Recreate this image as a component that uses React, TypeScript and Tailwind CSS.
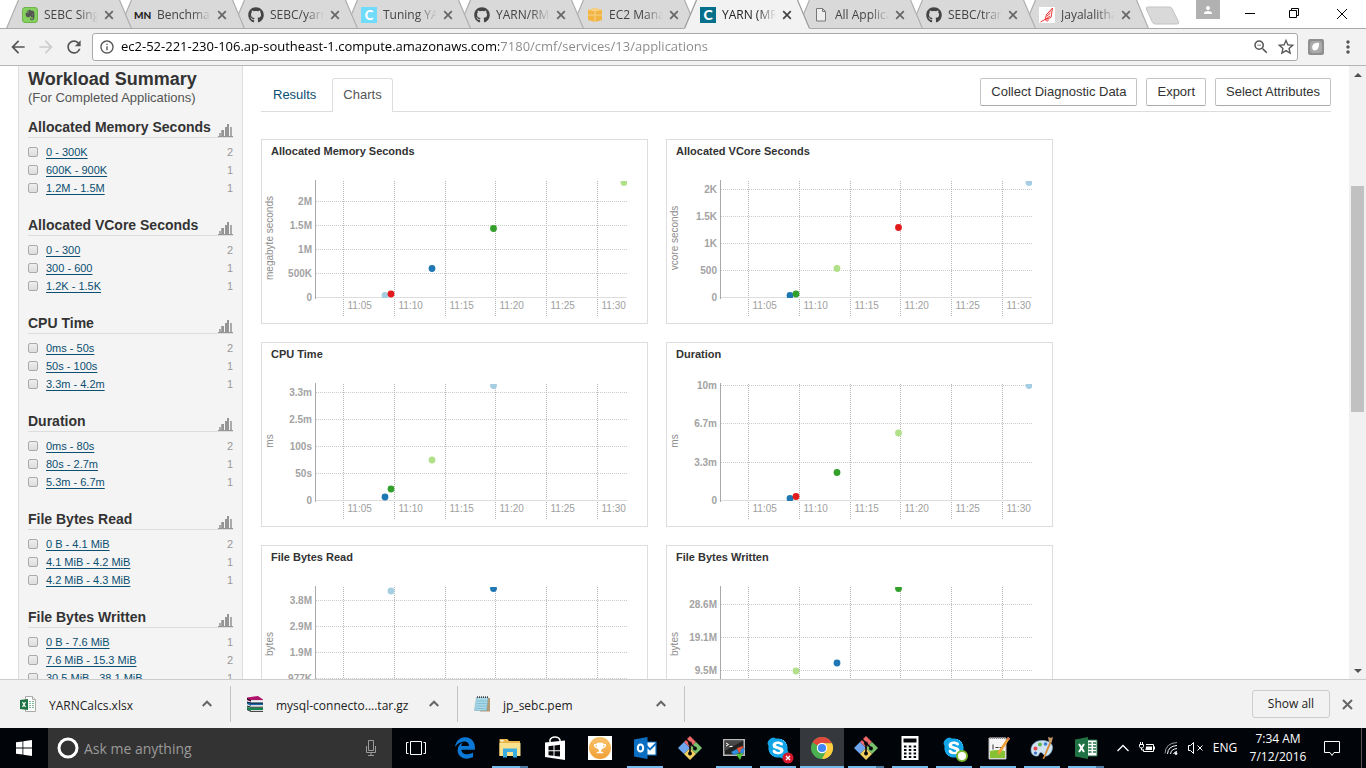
import React from "react";
import {
  MdArrowBack,
  MdArrowForward,
  MdRefresh,
  MdInfoOutline,
  MdZoomOut,
  MdStarBorder,
  MdMoreVert,
  MdPerson,
} from "react-icons/md";
import { FaEvernote, FaGithub, FaSkype, FaTrophy } from "react-icons/fa";
import { FaEdgeLegacy } from "react-icons/fa6";

/* ---------- Browser tabs ---------- */

type BrowserTab = { title: string; icon: React.ReactNode; active?: boolean };

const githubIcon = <FaGithub className="size-4 text-[#444]" />;

const browserTabs: BrowserTab[] = [
  {
    title: "SEBC Singapore",
    icon: (
      <span className="flex size-4 items-center justify-center rounded-[3px] border border-[#6fb34c] bg-[#85d160]">
        <FaEvernote className="size-3 text-[#555]" />
      </span>
    ),
  },
  {
    title: "Benchmark",
    icon: <span className="-ml-px font-[Lato] text-[10px] font-black text-[#222]">MN</span>,
  },
  { title: "SEBC/yarn", icon: githubIcon },
  {
    title: "Tuning YARN",
    icon: (
      <span className="flex size-4 items-center justify-center bg-[#6fdcfb] font-[Lato] text-[13px] leading-4 font-black text-white">
        C
      </span>
    ),
  },
  { title: "YARN/RM", icon: githubIcon },
  {
    title: "EC2 Management",
    icon: (
      <svg viewBox="0 0 16 16" className="size-4">
        <path d="M1 3l7-2 7 2v10l-7 2-7-2z" fill="#f2b544" />
        <path d="M1 3l7 1.6L15 3 8 1z" fill="#f8d183" />
        <path d="M8 4.6V15M1 8h14" stroke="#f9dfa6" strokeWidth="0.7" />
      </svg>
    ),
  },
  {
    title: "YARN (MR2)",
    active: true,
    icon: (
      <span className="flex size-4 items-center justify-center bg-[#04708c] font-[Lato] text-[14px] leading-4 font-black text-white">
        C
      </span>
    ),
  },
  {
    title: "All Applications",
    icon: (
      <svg viewBox="0 0 16 16" className="size-4" fill="#eee" stroke="#777">
        <path d="M3.5 1.500h6l3 3v9.500h-9zM9.500 1.500v3h3" />
      </svg>
    ),
  },
  { title: "SEBC/transfer", icon: githubIcon },
  {
    title: "Jayalalithaa",
    icon: (
      <svg viewBox="0 0 16 16" className="size-4" fill="none" stroke="#f23a3a">
        <path d="M0 0h16v16H0z" fill="#fff" stroke="none" />
        <path d="M13.500 1L12 10.500l-6 2 1.500-5zM12 3.500L7.500 7.500M11.500 6l-4 3.500M11 9l-5 3.500M6 12.500L1.500 15M6 12.500l2.500 2M9 11.500v2.500" />
      </svg>
    ),
  },
];

const tabLayers = ["z-10", "z-9", "z-8", "z-7", "z-6", "z-5", "z-20", "z-3", "z-2", "z-1"];

function BrowserTabItem({ tab, layer }: { tab: BrowserTab; layer: string }) {
  return (
    <div
      className={`relative -mb-px -ml-[13px] flex h-[29px] w-[126px] items-center gap-1.5 pt-px pr-[18px] pl-4 ${layer}`}
    >
      <svg viewBox="0 0 126 29" className="absolute inset-0 h-full w-full">
        <path d="M0 29L12.5 0H113.5L126 29Z" fill={tab.active ? "#f2f2f2" : "#d9d9d9"} />
        <path d="M0.5 28.5L12.5 0M113.5 0L125.5 28.5" stroke={tab.active ? "#999" : "#aeaeae"} strokeWidth="1.2" />
        {!tab.active && <path d="M0 28.5H126" stroke="#a9a9a9" />}
      </svg>
      <span className="relative flex w-4 shrink-0 items-center">{tab.icon}</span>
      <button
        type="button"
        className={`relative min-w-0 flex-1 overflow-hidden text-left text-[12px] leading-4 whitespace-nowrap [mask-image:linear-gradient(90deg,#000_65%,transparent)] ${tab.active ? "text-[#222]" : "text-[#444]"}`}
      >
        {tab.title}
      </button>
      <button type="button" aria-label={`Close ${tab.title}`} className="relative">
        <svg viewBox="0 0 10 10" className="size-[10px]" stroke={tab.active ? "#444" : "#666"} strokeWidth="1.7">
          <path d="M1.2 1.2l7.6 7.6M8.8 1.2L1.2 8.8" />
        </svg>
      </button>
    </div>
  );
}

function TabStrip() {
  return (
    <div className="flex h-[29px] shrink-0 border-b border-[#a9a9a9] bg-white pl-[19px]">
      {browserTabs.map((t, i) => (
        <BrowserTabItem key={t.title} tab={t} layer={tabLayers[i]} />
      ))}
      <button type="button" aria-label="New tab" className="mt-1.5 -ml-1 h-[19px]">
        <svg viewBox="0 0 36 19" className="h-[19px] w-9">
          <path d="M3 1h21.500a3 3 0 0 1 2.600 1.700L33.600 16q.6 2-1.400 2H10a3 3 0 0 1-2.600-1.700L1.300 3Q.9 1 3 1z" fill="#d9d9d9" stroke="#c3c3c3" />
        </svg>
      </button>
      <div className="ml-auto flex">
        <span className="mr-[7px] flex h-[19px] w-6 items-center justify-center bg-[#b1b1b1]">
          <MdPerson className="size-3 text-white" />
        </span>
        <button type="button" aria-label="Minimize" className="flex h-[27px] w-[45px] items-center justify-center">
          <svg viewBox="0 0 10 10" className="size-[10px]"><path d="M0 4.500h10" stroke="#000" /></svg>
        </button>
        <button type="button" aria-label="Restore" className="flex h-[27px] w-[45px] items-center justify-center">
          <svg viewBox="0 0 11 11" className="size-[11px]" fill="none" stroke="#000">
            <path d="M.5 2.500h7v7h-7zM2.500 2.500v-2h7v7h-2" />
          </svg>
        </button>
        <button type="button" aria-label="Close" className="flex h-[27px] w-[49px] items-center justify-center">
          <svg viewBox="0 0 10 10" className="size-[10px]" stroke="#000"><path d="M0 0l10 10M10 0L0 10" /></svg>
        </button>
      </div>
    </div>
  );
}

function Toolbar() {
  return (
    <div className="flex h-[37px] shrink-0 items-center border-b border-[#b6b6b6] bg-[#f2f2f2] pr-2 pl-2 text-[#555]">
      <div className="flex gap-2 pr-2">
        <button type="button" aria-label="Back"><MdArrowBack className="size-5" /></button>
        <button type="button" aria-label="Forward"><MdArrowForward className="size-5 text-[#ccc]" /></button>
        <button type="button" aria-label="Reload"><MdRefresh className="size-5" /></button>
      </div>
      <div className="flex h-7 min-w-0 flex-1 items-center rounded-[3px] border border-[#a9a9a9] bg-white pr-px pl-1.5">
        <MdInfoOutline className="size-4" />
        <input
          aria-label="Address"
          defaultValue="ec2-52-221-230-106.ap-southeast-1.compute.amazonaws.com:7180/cmf/services/13/applications"
          className="ml-1.5 min-w-0 flex-1 bg-[linear-gradient(90deg,#000_378px,#888_378px)] bg-clip-text text-[13px] text-transparent outline-none"
        />
        <button type="button" aria-label="Zoom out"><MdZoomOut className="size-[18px]" /></button>
        <button type="button" aria-label="Bookmark" className="ml-1.5"><MdStarBorder className="size-5" /></button>
      </div>
      <button type="button" aria-label="Extension" className="ml-2.5">
        <svg viewBox="0 0 16 16" className="size-4">
          <rect width="16" height="16" rx="2" fill="#8f8f8f" />
          <rect x="2" y="2" width="12" height="12" rx="3" fill="#aaa" />
          <path d="M5 11c-2.500-4 1-8 6-7 .5 4-1.500 9-6 7z" fill="#fff" />
        </svg>
      </button>
      <button type="button" aria-label="Menu" className="ml-3.5"><MdMoreVert className="size-5" /></button>
    </div>
  );
}

/* ---------- Sidebar ---------- */

const facets = [
  { title: "Allocated Memory Seconds", rows: [["0 - 300K", 2], ["600K - 900K", 1], ["1.2M - 1.5M", 1]] },
  { title: "Allocated VCore Seconds", rows: [["0 - 300", 2], ["300 - 600", 1], ["1.2K - 1.5K", 1]] },
  { title: "CPU Time", rows: [["0ms - 50s", 2], ["50s - 100s", 1], ["3.3m - 4.2m", 1]] },
  { title: "Duration", rows: [["0ms - 80s", 2], ["80s - 2.7m", 1], ["5.3m - 6.7m", 1]] },
  { title: "File Bytes Read", rows: [["0 B - 4.1 MiB", 2], ["4.1 MiB - 4.2 MiB", 1], ["4.2 MiB - 4.3 MiB", 1]] },
  { title: "File Bytes Written", rows: [["0 B - 7.6 MiB", 1], ["7.6 MiB - 15.3 MiB", 2], ["30.5 MiB - 38.1 MiB", 1]] },
];

function Sidebar() {
  return (
    <aside className="ml-[18px] w-[225px] shrink-0 border-x border-[#ddd] bg-[#f4f4f4] px-[9px] pt-0.5 text-[#333]">
      <h2 className="text-[18px] leading-[22px] font-bold">Workload Summary</h2>
      <p className="text-[13px] leading-[15px] text-[#555]">(For Completed Applications)</p>
      {facets.map((f, fi) => (
        <section key={f.title} className="pt-3 pb-1.5">
          <div className="flex h-[21px] items-center justify-between border-b border-[#ddd]">
            <h3 className="text-[14px] leading-[18px] font-bold whitespace-nowrap">{f.title}</h3>
            <button type="button" aria-label={`Histogram of ${f.title}`} className="self-end">
              <svg viewBox="0 0 15 14" className="h-[14px] w-[15px]">
                <path d="M1 10h2v3H1zM3 7h3v6H3zM12 4h2v9h-2z" fill="#aaa" />
                <path d="M4 7h2v6H4zM7 4h2v9H7zM9 1h2v12H9zM0 13h15v1H0z" fill="#959595" />
              </svg>
            </button>
          </div>
          <ul className="pt-[5px] text-[11px] leading-[18px]">
            {f.rows.map(([label, count], ri) => (
              <li key={label} className="flex items-center">
                <input
                  type="checkbox"
                  aria-labelledby={`facet-${fi}-${ri}`}
                  className="size-[10px] appearance-none rounded-[2px] border border-[#aaa] bg-linear-to-b from-[#eee] to-[#ddd]"
                />
                <a id={`facet-${fi}-${ri}`} href="#" className="ml-2 text-[#0b4f72] underline underline-offset-2">
                  {label}
                </a>
                <span className="ml-auto text-[#999]">{count}</span>
              </li>
            ))}
          </ul>
        </section>
      ))}
    </aside>
  );
}

/* ---------- Charts ---------- */

const LIGHT_BLUE = "#a6cee3";
const BLUE = "#1f78b4";
const LIGHT_GREEN = "#b2df8a";
const GREEN = "#33a02c";
const RED = "#e31a1c";

type Chart = {
  title: string;
  unit: string;
  ticks: [string, number][];
  dots: [number, number, string][];
};

const charts: Chart[] = [
  {
    title: "Allocated Memory Seconds",
    unit: "megabyte seconds",
    ticks: [["2M", 42.5], ["1.5M", 66.5], ["1M", 90.5], ["500K", 114.5]],
    dots: [[123, 136.5, LIGHT_BLUE], [129, 135, RED], [170, 109.5, BLUE], [231.5, 69.5, GREEN], [362, 23.5, LIGHT_GREEN]],
  },
  {
    title: "Allocated VCore Seconds",
    unit: "vcore seconds",
    ticks: [["2K", 30.5], ["1.5K", 57.5], ["1K", 84.5], ["500", 111.5]],
    dots: [[123, 136.5, BLUE], [129, 135, GREEN], [170, 109.5, LIGHT_GREEN], [231.5, 68.5, RED], [362, 23.5, LIGHT_BLUE]],
  },
  {
    title: "CPU Time",
    unit: "ms",
    ticks: [["3.3m", 30.5], ["2.5m", 57.5], ["100s", 84.5], ["50s", 111.5]],
    dots: [[123, 135, BLUE], [129, 127, GREEN], [170, 98, LIGHT_GREEN], [231.5, 23.5, LIGHT_BLUE]],
  },
  {
    title: "Duration",
    unit: "ms",
    ticks: [["10m", 23.5], ["6.7m", 61.5], ["3.3m", 100.5]],
    dots: [[123, 136.5, BLUE], [129, 134.5, RED], [170, 110.5, GREEN], [231.5, 71, LIGHT_GREEN], [362, 23.5, LIGHT_BLUE]],
  },
  {
    title: "File Bytes Read",
    unit: "bytes",
    ticks: [["3.8M", 35.5], ["2.9M", 61.5], ["1.9M", 87.5], ["977K", 113.5]],
    dots: [[129, 26, LIGHT_BLUE], [231.5, 23.5, BLUE]],
  },
  {
    title: "File Bytes Written",
    unit: "bytes",
    ticks: [["28.6M", 39.5], ["19.1M", 72.5], ["9.5M", 105.5]],
    dots: [[129, 106, LIGHT_GREEN], [170, 98, BLUE], [231.5, 23.5, GREEN]],
  },
];

const times: [string, number][] = [
  ["11:05", 81.5],
  ["11:10", 132.5],
  ["11:15", 183.5],
  ["11:20", 233.5],
  ["11:25", 284.5],
  ["11:30", 335.5],
];

function ChartCard({ chart, index }: { chart: Chart; index: number }) {
  return (
    <article className="w-[387px] border border-[#ddd] bg-white">
      <h3 className="px-[9px] pt-[3px] text-[11px] leading-4 font-bold text-[#333]">{chart.title}</h3>
      <svg viewBox="0 0 385 164" className="block h-[164px] w-[385px] text-[10px]">
        <clipPath id={`plot-${index}`}>
          <rect x="54" y="22" width="311" height="117" />
        </clipPath>
        <g stroke="#ccc" strokeDasharray="1 1">
          {chart.ticks.map(([label, y]) => (
            <path key={label} d={`M54 ${y}H365`} />
          ))}
        </g>
        <g stroke="#b5b5b5" strokeDasharray="1 1">
          {times.map(([label, x]) => (
            <path key={label} d={`M${x} 22V157`} />
          ))}
        </g>
        <path d="M54 138.5H365" stroke="#ddd" />
        <path d="M53.5 21V140" stroke="#aaa" />
        <g fill="#a3a3a3" fontWeight="bold" textAnchor="end">
          {chart.ticks.map(([label, y]) => (
            <text key={label} x="50" y={y + 3.5}>{label}</text>
          ))}
          <text x="50" y="142">0</text>
        </g>
        <g fill="#a0a0a0">
          {times.map(([label, x]) => (
            <text key={label} x={x + 4} y="150">{label}</text>
          ))}
        </g>
        <text transform="translate(11 79) rotate(-90)" textAnchor="middle" fill="#8c8c8c">{chart.unit}</text>
        <g clipPath={`url(#plot-${index})`}>
          {chart.dots.map(([x, y, color]) => (
            <circle key={`${x}`} cx={x} cy={y} r="3.4" fill={color} />
          ))}
        </g>
      </svg>
    </article>
  );
}

function Main() {
  const action =
    "h-7 rounded-[2px] border border-[#c4c4c4] border-b-[#aaa] bg-white px-[10px] text-[13px] leading-[26px] text-[#333]";
  return (
    <main className="min-w-0 flex-1 px-[18px] pt-3">
      <div className="flex justify-between border-b border-[#ddd]">
        <div role="tablist" className="-mb-px flex text-[13px] leading-8">
          <a role="tab" href="#" className="mr-1 px-3 pt-px text-[#0b4f72]">Results</a>
          <a role="tab" aria-selected="true" href="#" className="rounded-t-[3px] border border-b-0 border-[#ddd] bg-white px-[10px] pb-px text-[#555]">
            Charts
          </a>
        </div>
        <div className="flex gap-[9px]">
          <button type="button" className={action}>Collect Diagnostic Data</button>
          <button type="button" className={action}>Export</button>
          <button type="button" className={action}>Select Attributes</button>
        </div>
      </div>
      <div className="mt-[27px] flex flex-wrap gap-[18px]">
        {charts.map((c, i) => (
          <ChartCard key={c.title} chart={c} index={i} />
        ))}
      </div>
    </main>
  );
}

function Scrollbar() {
  return (
    <div className="flex w-[17px] shrink-0 flex-col bg-[#f1f1f1]">
      <button type="button" aria-label="Scroll up" className="flex h-[17px] items-center justify-center">
        <svg viewBox="0 0 8 4" className="h-1 w-2"><path d="M0 4l4-4 4 4z" fill="#505050" /></svg>
      </button>
      <div className="flex-[103]" />
      <div className="mx-0.5 flex-[226] bg-[#c1c1c1]" />
      <div className="flex-[250]" />
      <button type="button" aria-label="Scroll down" className="flex h-[17px] items-center justify-center">
        <svg viewBox="0 0 8 4" className="h-1 w-2"><path d="M0 0l4 4 4-4z" fill="#505050" /></svg>
      </button>
    </div>
  );
}

/* ---------- Downloads ---------- */

const excelFile = (
  <svg viewBox="0 0 16 16" className="size-4">
    <path d="M5.5.5h7l3 3v12h-10z" fill="#fff" stroke="#aaa" />
    <path d="M12.5.5v3h3" fill="#eee" stroke="#aaa" />
    <path d="M9 5.500h2M12 5.500h2M9 7.500h2M12 7.500h2M9 9.500h2M12 9.500h2M9 11.500h2M12 11.500h2" stroke="#7fb896" />
    <path d="M0 4l8-1v11l-8-1z" fill="#1f7244" />
    <path d="M2.500 6l3 5M5.500 6l-3 5" stroke="#fff" strokeWidth="1.2" />
  </svg>
);

const archiveFile = (
  <svg viewBox="0 0 16 16" className="size-4">
    <path d="M0 1.500L11 0l5 3.500V5H4L0 3z" fill="#b0146c" />
    <path d="M0 2l4 2v1.800L0 4z" fill="#4a0830" />
    <path d="M4 4h12v1H4z" fill="#ddd" />
    <path d="M0 6l4 .5h12V10H4L0 8z" fill="#1c62a8" />
    <path d="M0 5.500l4 1.200h12v.8H4L0 6.500z" fill="#111" />
    <path d="M4 9h12v1H4z" fill="#ddd" />
    <path d="M0 11l4 .5h12V15H4l-4-2z" fill="#15854f" />
    <path d="M0 9.500l4 1.200h12v.8H4l-4-1zM0 13l4 2.200h12v.8H4l-4-2z" fill="#111" />
    <path d="M4 14h12v1H4z" fill="#ddd" />
  </svg>
);

const noteFile = (
  <svg viewBox="0 0 16 16" className="size-4">
    <path d="M4 2h12v13.500H6z" fill="#b39a72" />
    <path d="M2.500 1.500H14l-1.500 13H.5z" fill="#a9d8e8" stroke="#79aebf" strokeWidth=".6" />
    <path d="M3 5h9.500M2.800 7.500h9.500M2.500 10h9.500M2 12.500h9.500" stroke="#6fb0c6" strokeWidth=".6" />
    <path d="M3 1.200h11" stroke="#444" strokeWidth="1.8" strokeDasharray="1 1" />
  </svg>
);

const downloads = [
  { name: "YARNCalcs.xlsx", icon: excelFile },
  { name: "mysql-connecto....tar.gz", icon: archiveFile },
  { name: "jp_sebc.pem", icon: noteFile },
];

function DownloadBar() {
  return (
    <div className="flex h-[49px] shrink-0 items-center border-t border-[#ccc] bg-[#f2f2f2]">
      {downloads.map((d) => (
        <div
          key={d.name}
          className="flex h-9 w-[227px] items-center border-r border-[#c4c4c4] pl-4 first:w-[231px] first:pl-5"
        >
          {d.icon}
          <button type="button" className="ml-[13px] pt-1 text-[12px] leading-5 text-[#222]">{d.name}</button>
          <button type="button" aria-label={`Options for ${d.name}`} className="mr-[18px] ml-auto">
            <svg viewBox="0 0 10 10" className="size-[10px]" fill="none" stroke="#666" strokeWidth="2">
              <path d="M.7 7L5 2.700 9.300 7" />
            </svg>
          </button>
        </div>
      ))}
      <button type="button" className="mr-3 ml-auto h-7 w-[78px] rounded-[3px] border border-[#ccc] text-[12px] leading-6 text-[#222]">
        Show all
      </button>
      <button type="button" aria-label="Close downloads" className="mr-[13px]">
        <svg viewBox="0 0 11 11" className="size-[11px]" stroke="#666" strokeWidth="2">
          <path d="M1 1l9 9M10 1L1 10" />
        </svg>
      </button>
    </div>
  );
}

/* ---------- Taskbar ---------- */

const explorerIcon = (
  <svg viewBox="0 0 24 24" className="size-6">
    <path d="M1.500 3h8l1.500 2h11v15H1.500z" fill="#e8b64c" />
    <path d="M1.500 7h21v13h-21z" fill="#fbe08d" />
    <path d="M2.500 4h3v1.500h-3z" fill="#f7f7f7" />
    <path d="M5 21.500v-9h14v9h-4V16H9v5.500z" fill="#3aace0" />
  </svg>
);

const storeIcon = (
  <svg viewBox="0 0 24 24" className="size-6">
    <path d="M2 6.500l20-2V24L2 21z" fill="#fff" />
    <path d="M7 6V4q1-3 5-3t5 3v2" fill="none" stroke="#fff" strokeWidth="1.500" />
    <path d="M5.500 10.200l5-.6v4.600h-5zM11.500 9.500l5.500-.7v5.400h-5.500zM5.500 15.200h5v4.600l-5-.6zM11.500 15.200H17v5.400l-5.500-.7z" fill="#05070b" />
  </svg>
);

const trophyIcon = (
  <span className="flex size-6 items-center justify-center bg-white">
    <span className="flex size-[22px] items-center justify-center rounded-full bg-linear-to-b from-[#f8c268] to-[#f0a034]">
      <FaTrophy className="size-3 text-white" />
    </span>
  </span>
);

const outlookIcon = (
  <svg viewBox="0 0 24 24" className="size-6">
    <path d="M13 6h10v13H13z" fill="#fff" stroke="#0a6fc2" strokeWidth="1.2" />
    <path d="M13 9.500l4 4 6-6" fill="none" stroke="#0a6fc2" strokeWidth="1.8" />
    <path d="M1 3.500L14.500 1v22L1 20.500z" fill="#0a6fc2" />
    <ellipse cx="7.5" cy="12" rx="2.7" ry="3.6" fill="none" stroke="#fff" strokeWidth="2" />
  </svg>
);

const gitIcon = (
  <svg viewBox="0 0 24 24" className="size-6">
    <path d="M12 0l6 6-6 6-6-6z" fill="#ec6a6a" />
    <path d="M6 6l6 6-6 6-6-6z" fill="#6fa4ee" />
    <path d="M18 6l6 6-6 6-6-6z" fill="#7cc46b" />
    <path d="M12 12l6 6-6 6-6-6z" fill="#f3cf62" />
    <path d="M8 3l9 9M12 7v11" stroke="#05070b" strokeWidth="1.6" />
    <g fill="#05070b">
      <circle cx="12" cy="7.5" r="1.9" />
      <circle cx="17" cy="12.5" r="1.9" />
      <circle cx="12" cy="17.5" r="1.9" />
    </g>
  </svg>
);

const puttyIcon = (
  <svg viewBox="0 0 24 24" className="size-6">
    <path d="M1 3h22v17H1z" fill="#bbb" />
    <path d="M2.500 4.500h19v14h-19z" fill="#222" />
    <path d="M2.500 4.500h19L2.500 15z" fill="#484848" />
    <path d="M4 7l2.500 1.500L4 10M7.500 10.500h3" fill="none" stroke="#fff" />
    <path d="M15 12l6-2-1 6-4 1z" fill="#e95035" />
    <path d="M9 16l6-3 2 4-5 2z" fill="#2f8bde" />
    <path d="M19 13l4-1-2 6-3-1z" fill="#2f8bde" />
    <path d="M14 18l7-1-3 7z" fill="#57c23c" />
  </svg>
);

const chromeIcon = (
  <svg viewBox="0 0 24 24" className="size-6">
    <circle cx="12" cy="12" r="11" fill="#4caf50" />
    <path d="M12 12L2.500 6.500A11 11 0 0 1 22 7.300H12z" fill="#e0483c" />
    <path d="M12 7.300h10A11 11 0 0 1 12 23l4.500-8.500z" fill="#ffcd40" />
    <circle cx="12" cy="12" r="5.2" fill="#fff" />
    <circle cx="12" cy="12" r="4.1" fill="#4285f4" />
  </svg>
);

const calcIcon = (
  <svg viewBox="0 0 24 24" className="size-6">
    <path d="M3.500 0h17v24h-17z" fill="#fff" />
    <path d="M5.500 2.500h13v4h-13z" fill="#05070b" />
    <path d="M6 10.500h13M6 14h13M6 17.500h13M6 21h13" stroke="#05070b" strokeWidth="2" strokeDasharray="2.5 2.3" />
  </svg>
);

const notepadIcon = (
  <svg viewBox="0 0 24 24" className="size-6">
    <path d="M3 2h17v21H3z" fill="#f5f5f5" stroke="#bbb" />
    <path d="M4 2h15" stroke="#888" strokeWidth="2" strokeDasharray="1 1" />
    <path d="M4 15q8-2 15 0v7H4z" fill="#86c232" />
    <path d="M7 8.500v5M9.500 11.500h3M13.500 11.500h3" stroke="#333" />
    <path d="M22 1l2 1.500L14.500 17l-3 2 .5-3.500z" fill="#f0a13a" />
    <path d="M22 1l2 1.500-1 1.700-2-1.500z" fill="#d56b5a" />
  </svg>
);

const paintIcon = (
  <svg viewBox="0 0 24 24" className="size-6">
    <path d="M12 4.500C5 4.500 1 9 1 14c0 5 4 6.500 6.500 6 2-.4 1-3 3-3.500 3-.5 3 4.500 6 3.500 3.500-1 6-5 6-8.500 0-4.500-4.500-7-10.500-7z" fill="#cfe3f2" stroke="#7fa8c8" strokeWidth=".7" />
    <circle cx="5.5" cy="12.5" r="2" fill="#e5484d" />
    <circle cx="10" cy="8.5" r="2" fill="#5fb84c" />
    <circle cx="15.5" cy="8" r="1.8" fill="#3b7fd1" />
    <circle cx="5.5" cy="17" r="1.6" fill="#3b6fc1" />
    <path d="M19.500 6l1.800.8-7 16-1.800.2z" fill="#d98b3a" />
    <path d="M18 1q3 1.500 5 0l-1.500 6-2.500-1z" fill="#c79a6a" />
  </svg>
);

const excelIcon = (
  <svg viewBox="0 0 24 24" className="size-6">
    <path d="M13 4h10v16H13z" fill="#fff" stroke="#1f7244" />
    <path d="M14.500 7h3M19 7h3M14.500 10h3M19 10h3M14.500 13h3M19 13h3M14.500 16h3M19 16h3" stroke="#1f7244" strokeWidth="1.5" />
    <path d="M1 3.500L14 1v22L1 20.500z" fill="#1f7244" />
    <path d="M5 8l5 8M10 8l-5 8" stroke="#fff" strokeWidth="2" />
  </svg>
);

const skypeIcon = <FaSkype className="size-6 rounded-full bg-[radial-gradient(#fff_55%,transparent_56%)] text-[#12a5e8]" />;

type App = { name: string; icon: React.ReactNode; state?: "running" | "stacked" | "focused" };

const pinned: App[] = [
  { name: "Edge", icon: <FaEdgeLegacy className="size-[22px] text-[#0a78d4]" /> },
  { name: "File Explorer", icon: explorerIcon, state: "stacked" },
  { name: "Store", icon: storeIcon },
  { name: "Rewards", icon: trophyIcon },
  { name: "Outlook", icon: outlookIcon, state: "running" },
  { name: "Git", icon: gitIcon },
];

const running: App[] = [
  { name: "Terminal", icon: puttyIcon, state: "running" },
  {
    name: "Skype",
    icon: (
      <span className="relative">
        {skypeIcon}
        <svg viewBox="0 0 12 12" className="absolute -right-1 -bottom-1 size-3">
          <circle cx="6" cy="6" r="5.5" fill="#d8182c" />
          <path d="M4 4l4 4M8 4L4 8" stroke="#fff" strokeWidth="1.3" />
        </svg>
      </span>
    ),
    state: "running",
  },
  { name: "Chrome", icon: chromeIcon, state: "focused" },
  { name: "Git Bash", icon: gitIcon, state: "stacked" },
  { name: "Calculator", icon: calcIcon, state: "running" },
  {
    name: "Skype for Business",
    icon: (
      <span className="relative">
        {skypeIcon}
        <span className="absolute -right-0.5 -bottom-0.5 size-3 rounded-full border-2 border-[#7cb92f] bg-white" />
      </span>
    ),
    state: "running",
  },
  { name: "Notepad++", icon: notepadIcon, state: "running" },
  { name: "Paint", icon: paintIcon, state: "running" },
  { name: "Excel", icon: excelIcon, state: "stacked" },
];

function AppButton({ app, width }: { app: App; width: string }) {
  return (
    <button
      type="button"
      aria-label={app.name}
      className={`flex h-10 flex-col items-center ${width} ${app.state === "focused" ? "bg-[#35383c]" : ""}`}
    >
      <span className="flex h-[38px] items-center pt-0.5">{app.icon}</span>
      {app.state === "focused" && <span className="h-0.5 w-full bg-[#76b9ed]" />}
      {app.state === "running" && <span className="h-0.5 w-9 bg-[#76b9ed]" />}
      {app.state === "stacked" && <span className="h-0.5 w-9 border-r-8 border-[#4a7ba3] bg-[#76b9ed]" />}
    </button>
  );
}

function Taskbar() {
  const tray = "flex h-10 w-6 items-center justify-center";
  return (
    <div className="flex h-10 shrink-0 items-center bg-[#010409] text-white">
      <button type="button" aria-label="Start" className="flex h-10 w-12 items-center justify-center">
        <svg viewBox="0 0 16 16" className="size-4" fill="#fff">
          <path d="M0 2.300L6.500 1.400v6.200H0zM7.300 1.300L16 0v7.600H7.300zM0 8.400h6.500v6.200L0 13.700zM7.300 8.400H16V16l-8.700-1.300z" />
        </svg>
      </button>
      <div className="flex h-10 w-[344px] items-center bg-[#333] pl-[9px]">
        <svg viewBox="0 0 22 22" className="size-[22px]" fill="none">
          <circle cx="11" cy="11" r="9" stroke="#fff" strokeWidth="3" />
        </svg>
        <input
          aria-label="Search"
          placeholder="Ask me anything"
          className="ml-[5px] min-w-0 flex-1 bg-transparent text-[14px] text-white outline-none placeholder:text-[#9a9a9a]"
        />
        <button type="button" aria-label="Voice search" className="mr-[15px]">
          <svg viewBox="0 0 12 18" className="h-[18px] w-3" fill="none" stroke="#9a9a9a">
            <path d="M3.500 1.500h5v10h-5zM1.500 7v6.500h9V7M6 13.500v3M3 16.500h6" />
          </svg>
        </button>
      </div>
      <button type="button" aria-label="Task view" className="flex h-10 w-[50px] items-center justify-center pr-0.5">
        <svg viewBox="0 0 20 14" className="h-[14px] w-5" fill="none" stroke="#fff">
          <path d="M4.500.5h11v13h-11zM2.500 1.500h-2v11h2M17.500 1.500h2v11h-2" />
        </svg>
      </button>
      {pinned.map((a) => <AppButton key={a.name} app={a} width="w-[45px]" />)}
      {running.map((a) => <AppButton key={a.name} app={a} width="w-11" />)}
      <div className="ml-auto flex items-center text-[12px] leading-[18px]">
        <button type="button" aria-label="Show hidden icons" className={tray}>
          <svg viewBox="0 0 12 8" className="h-2 w-3" fill="none" stroke="#fff" strokeWidth="1.3"><path d="M.5 7L6 1.500 11.500 7" /></svg>
        </button>
        <button type="button" aria-label="Battery" className={tray}>
          <svg viewBox="0 0 16 12" className="h-3 w-4" fill="none" stroke="#fff">
            <path d="M7 2.500h7.500v7h-10V7.500M15.500 4.500v3M1.500 0v2M3.500 0v2M.5 2.500h4V4.500L3.500 6H1.500L.5 4.500zM2.500 6v2h2" />
            <path d="M7 4.500H13v3.500H6.500z" fill="#fff" stroke="none" />
          </svg>
        </button>
        <button type="button" aria-label="Network" className={tray}>
          <svg viewBox="0 0 14 14" className="size-[14px]" fill="none" stroke="#fff">
            <path d="M1 12.500Q1.500 2 13 1.500" stroke="#999" />
            <path d="M3.500 13Q4 5 13 4.500M6.500 13Q7 8 13 7.500M9.500 13Q10 11 13 10.500" />
            <circle cx="12" cy="12.5" r="1" fill="#fff" />
          </svg>
        </button>
        <button type="button" aria-label="Volume" className={tray}>
          <svg viewBox="0 0 15 12" className="h-3 w-[15px]" fill="none" stroke="#fff">
            <path d="M.5 3.500h2L5.500.5v11l-3-3h-2zM9.500 3.500l5 5M14.500 3.500l-5 5" />
          </svg>
        </button>
        <button type="button" className="h-10 w-9">ENG</button>
        <button type="button" className="h-10 w-[70px]">
          <span className="block">7:34 AM</span>
          <span className="block">7/12/2016</span>
        </button>
        <button type="button" aria-label="Notifications" className="flex h-10 w-[38px] items-center justify-center">
          <svg viewBox="0 0 17 17" className="size-[17px]" fill="none" stroke="#fff">
            <path d="M.5 1.500h15v11H10l-2 3-2-3H.5z" />
          </svg>
        </button>
        <button type="button" aria-label="Show desktop" className="ml-2.5 h-10 w-[5px] border-l border-[#555]" />
      </div>
    </div>
  );
}

export default function App() {
  return (
    <div className="flex h-screen flex-col overflow-hidden bg-white font-['Open_Sans','Noto_Sans',sans-serif]">
      <TabStrip />
      <Toolbar />
      <div className="flex min-h-0 flex-1 overflow-hidden">
        <div className="flex min-w-0 flex-1 overflow-hidden font-['Liberation_Sans',Arial,sans-serif]">
          <Sidebar />
          <Main />
        </div>
        <Scrollbar />
      </div>
      <DownloadBar />
      <Taskbar />
    </div>
  );
}
